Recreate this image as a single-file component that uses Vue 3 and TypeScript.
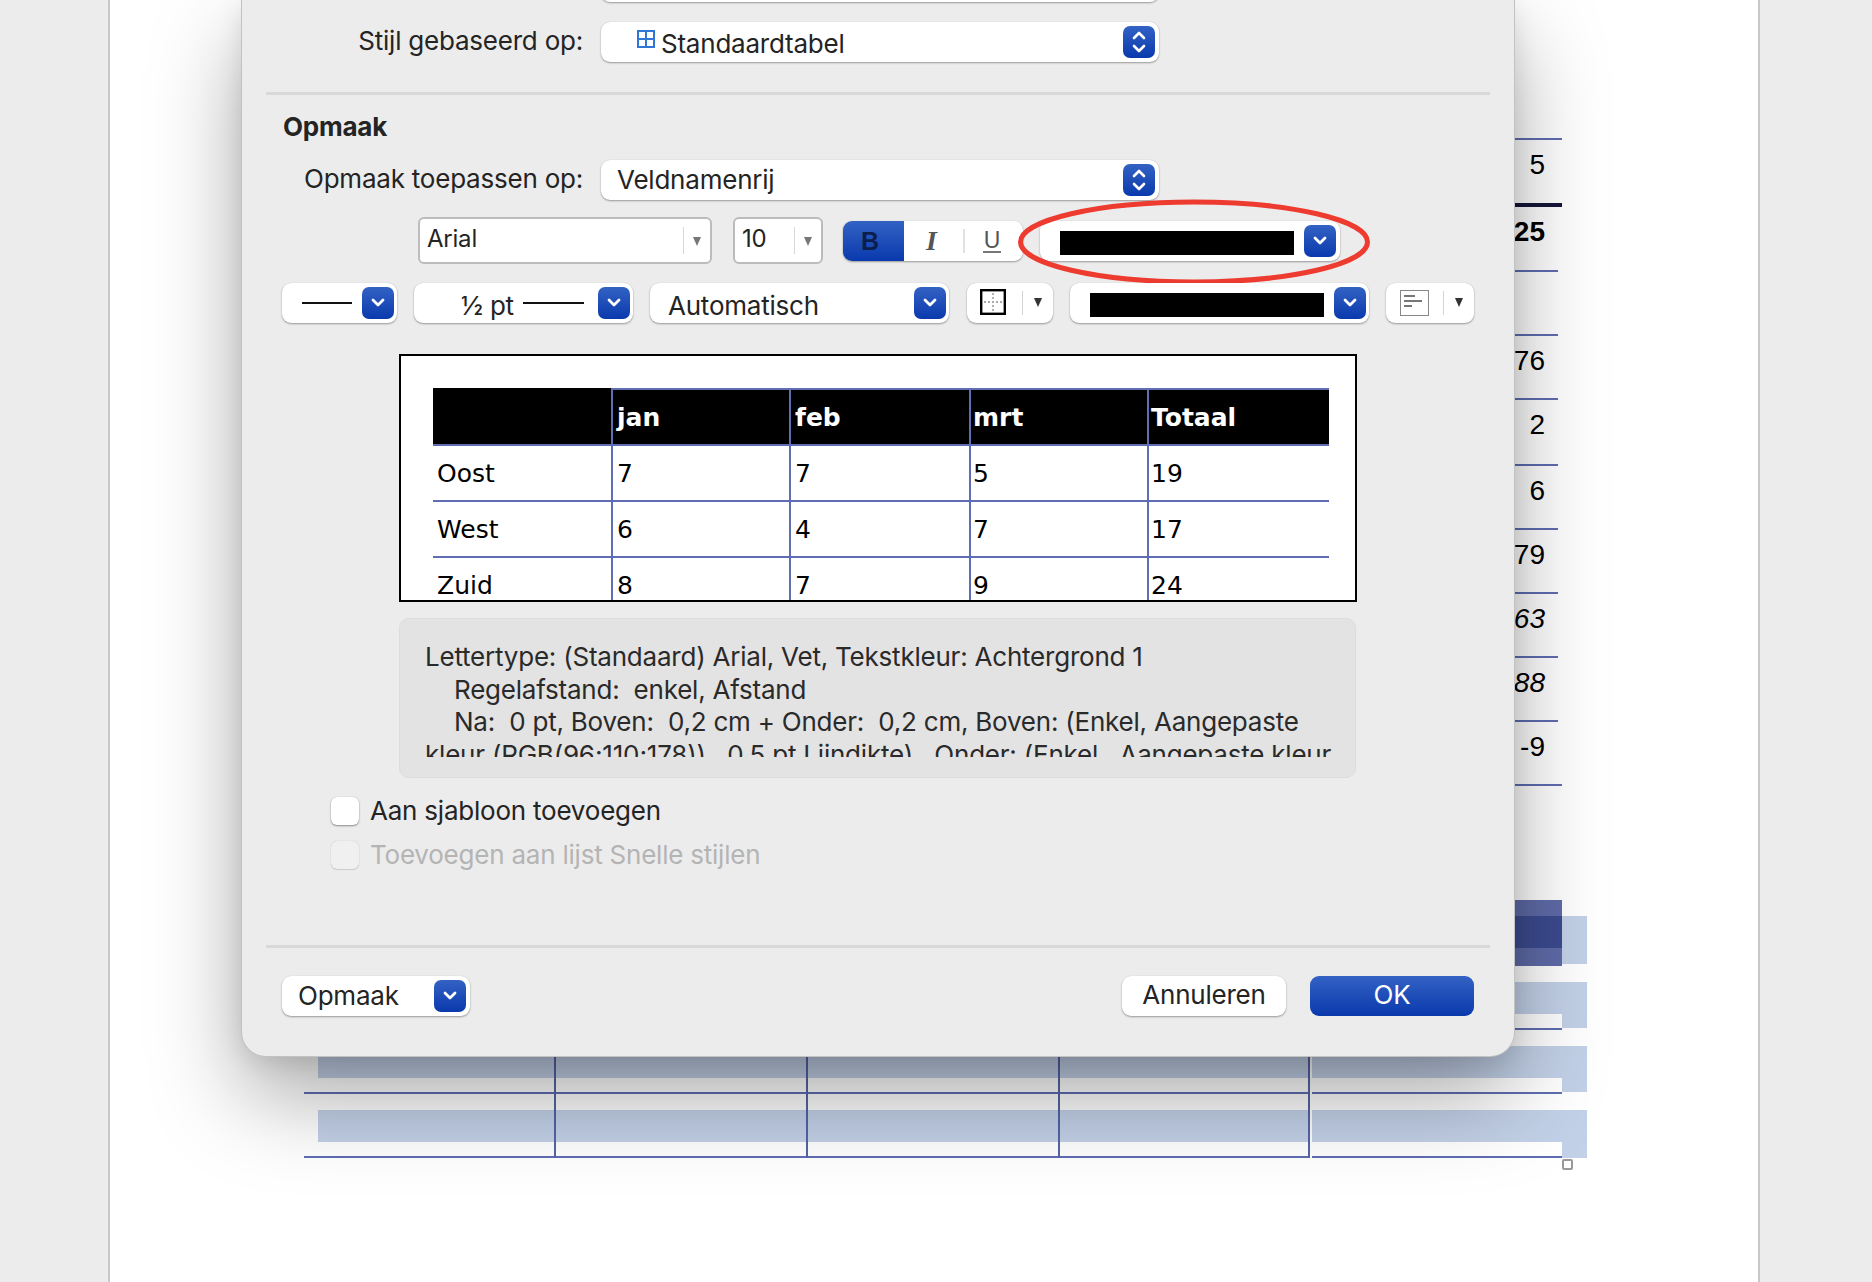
<script setup lang="ts">
interface DocRow {
  text: string
  h: number
  kind?: 'bold' | 'italic'
  thick?: boolean
}

const docRows: DocRow[] = [
  { text: '5', h: 65, thick: true },
  { text: '25', h: 67, kind: 'bold' },
  { text: '', h: 64 },
  { text: '76', h: 64 },
  { text: '2', h: 66 },
  { text: '6', h: 64 },
  { text: '79', h: 64 },
  { text: '63', h: 64, kind: 'italic' },
  { text: '88', h: 64, kind: 'italic' },
  { text: '-9', h: 64 }
]

const previewHead = ['', 'jan', 'feb', 'mrt', 'Totaal']
const previewRows = [
  ['Oost', '7', '7', '5', '19'],
  ['West', '6', '4', '7', '17'],
  ['Zuid', '8', '7', '9', '24']
]

// double spaces matter here, so they stay in strings
const infoLines = [
  { text: 'Lettertype: (Standaard) Arial, Vet, Tekstkleur: Achtergrond 1', indent: false },
  { text: 'Regelafstand:  enkel, Afstand', indent: true },
  { text: 'Na:  0 pt, Boven:  0,2 cm + Onder:  0,2 cm, Boven: (Enkel, Aangepaste', indent: true },
  { text: 'kleur (RGB(96;110;178)),  0,5 pt Lijndikte),  Onder: (Enkel,  Aangepaste kleur', indent: false }
]
</script>

<template>
  <div class="screen">
    <div class="page">
      <div class="doc-rows">
        <div
          v-for="(row, i) in docRows"
          :key="i"
          class="doc-row"
          :class="[row.kind, { thick: row.thick }]"
          :style="{ height: row.h + 'px' }"
        >
          {{ row.text }}
        </div>
        <div class="doc-end"></div>
      </div>

      <div class="doc-bars">
        <div class="bar-row first"><div class="bar-core"></div></div>
        <div class="bar-row"><div class="bar-light"></div></div>
        <div class="bar-row"><div class="bar-light"></div></div>
        <div class="bar-row last"><div class="bar-light"></div></div>
        <div class="vlines">
          <span></span><span></span><span></span><span></span>
        </div>
        <div class="handle"></div>
      </div>
    </div>

    <div class="dialog">
      <div class="form-row stub">
        <span class="label"></span>
        <div class="select wide"></div>
      </div>
      <div class="form-row based">
        <span class="label">Stijl gebaseerd op:</span>
        <div class="select wide">
          <svg class="table-icon" width="18" height="18" viewBox="0 0 18 18">
            <path d="M1 1h16v16H1zM9 1v16M1 9h16" fill="none" stroke="#2f76d6" stroke-width="2" />
          </svg>
          <span class="select-text">Standaardtabel</span>
          <span class="btn-blue stepper">
            <svg width="16" height="26" viewBox="0 0 16 26">
              <path d="M3 9l5-5 5 5M3 17l5 5 5-5" fill="none" stroke="#fff" stroke-width="2.6" stroke-linecap="round" stroke-linejoin="round" />
            </svg>
          </span>
        </div>
      </div>

      <div class="divider d1"></div>
      <div class="heading">Opmaak</div>

      <div class="form-row apply">
        <span class="label">Opmaak toepassen op:</span>
        <div class="select wide">
          <span class="select-text plain">Veldnamenrij</span>
          <span class="btn-blue stepper">
            <svg width="16" height="26" viewBox="0 0 16 26">
              <path d="M3 9l5-5 5 5M3 17l5 5 5-5" fill="none" stroke="#fff" stroke-width="2.6" stroke-linecap="round" stroke-linejoin="round" />
            </svg>
          </span>
        </div>
      </div>

      <div class="font-row">
        <div class="combo arial">
          <span class="combo-text">Arial</span>
          <span class="combo-sep"></span>
          <span class="arrow"></span>
        </div>
        <div class="combo size">
          <span class="combo-text">10</span>
          <span class="combo-sep"></span>
          <span class="arrow"></span>
        </div>
        <div class="biu">
          <span class="biu-b">B</span>
          <span class="biu-i">I</span>
          <span class="biu-sep"></span>
          <span class="biu-u">U</span>
        </div>
        <div class="select colour font-colour">
          <span class="swatch"></span>
          <span class="btn-blue">
            <svg width="16" height="12" viewBox="0 0 16 12">
              <path d="M3 3l5 5 5-5" fill="none" stroke="#fff" stroke-width="2.8" stroke-linecap="round" stroke-linejoin="round" />
            </svg>
          </span>
          <svg class="ellipse" width="352" height="86" viewBox="0 0 352 86">
            <ellipse cx="176" cy="43" rx="173.5" ry="40" fill="none" stroke="#ee3b30" stroke-width="5" />
          </svg>
        </div>
      </div>

      <div class="border-row">
        <div class="select line-style">
          <span class="line l50"></span>
          <span class="btn-blue">
            <svg width="16" height="12" viewBox="0 0 16 12">
              <path d="M3 3l5 5 5-5" fill="none" stroke="#fff" stroke-width="2.8" stroke-linecap="round" stroke-linejoin="round" />
            </svg>
          </span>
        </div>
        <div class="select line-width">
          <span class="pt">½ pt</span>
          <span class="line l61"></span>
          <span class="btn-blue">
            <svg width="16" height="12" viewBox="0 0 16 12">
              <path d="M3 3l5 5 5-5" fill="none" stroke="#fff" stroke-width="2.8" stroke-linecap="round" stroke-linejoin="round" />
            </svg>
          </span>
        </div>
        <div class="select auto">
          <span class="select-text plain">Automatisch</span>
          <span class="btn-blue">
            <svg width="16" height="12" viewBox="0 0 16 12">
              <path d="M3 3l5 5 5-5" fill="none" stroke="#fff" stroke-width="2.8" stroke-linecap="round" stroke-linejoin="round" />
            </svg>
          </span>
        </div>
        <div class="select tool border-tool">
          <svg width="26" height="26" viewBox="0 0 26 26">
            <rect x="1.2" y="1.2" width="23.6" height="23.6" fill="#fff" stroke="#000" stroke-width="2.4" />
            <path d="M13 4v18M4 13h18" stroke="#aaa" stroke-width="1.8" stroke-dasharray="2 2" />
          </svg>
          <span class="tool-sep"></span>
          <span class="arrow dark"></span>
        </div>
        <div class="select colour fill-colour">
          <span class="swatch"></span>
          <span class="btn-blue">
            <svg width="16" height="12" viewBox="0 0 16 12">
              <path d="M3 3l5 5 5-5" fill="none" stroke="#fff" stroke-width="2.8" stroke-linecap="round" stroke-linejoin="round" />
            </svg>
          </span>
        </div>
        <div class="select tool align-tool">
          <svg width="29" height="26" viewBox="0 0 29 26">
            <rect x="0.5" y="0.5" width="28" height="25" fill="#fff" stroke="#888" />
            <path d="M4 6h11M4 11h18M4 16h8" stroke="#777" stroke-width="2" />
          </svg>
          <span class="tool-sep"></span>
          <span class="arrow dark"></span>
        </div>
      </div>

      <div class="preview">
        <div class="pv-table">
          <div v-for="(head, i) in previewHead" :key="'h' + i" class="pv-head" :class="{ blank: i === 0 }">{{ head }}</div>
          <template v-for="(row, r) in previewRows" :key="r">
            <div v-for="(cell, c) in row" :key="c" class="pv-cell" :class="{ first: c === 0 }">{{ cell }}</div>
          </template>
        </div>
      </div>

      <div class="info">
        <div class="info-clip">
          <div v-for="(line, i) in infoLines" :key="i" :class="{ indent: line.indent }">{{ line.text }}</div>
        </div>
      </div>

      <label class="check">
        <span class="box"></span>
        <span>Aan sjabloon toevoegen</span>
      </label>
      <label class="check disabled">
        <span class="box"></span>
        <span>Toevoegen aan lijst Snelle stijlen</span>
      </label>

      <div class="divider d2"></div>

      <div class="footer">
        <div class="select opmaak">
          <span class="select-text plain">Opmaak</span>
          <span class="btn-blue">
            <svg width="16" height="12" viewBox="0 0 16 12">
              <path d="M3 3l5 5 5-5" fill="none" stroke="#fff" stroke-width="2.8" stroke-linecap="round" stroke-linejoin="round" />
            </svg>
          </span>
        </div>
        <div class="actions">
          <button class="btn cancel">Annuleren</button>
          <button class="btn ok">OK</button>
        </div>
      </div>
    </div>
  </div>
</template>

<style>
html,
body {
  margin: 0;
  overflow: hidden;
  background: #ececec;
}
</style>

<style scoped>
.screen {
  position: relative;
  width: 1872px;
  height: 1282px;
  overflow: hidden;
  background: #ececec;
  font-family: Inter, 'Liberation Sans', sans-serif;
  letter-spacing: -0.22px;
  color: #242424;
}

.page {
  margin-left: 108px;
  width: 1652px;
  height: 1282px;
  box-sizing: border-box;
  background: #fff;
  border-left: 2px solid #c8c8c8;
  border-right: 2px solid #c8c8c8;
  padding-top: 138px;
}

.doc-rows {
  margin-left: 1301px;
  width: 147px;
  font-family: 'Liberation Sans', Arial, sans-serif;
  letter-spacing: 0;
  color: #000;
}

.doc-row {
  box-sizing: border-box;
  border-top: 2px solid #5f6eb2;
  padding-right: 13px;
  text-align: right;
  line-height: 50px;
  font-size: 28px;
}

.doc-row.thick {
  width: 151px;
  padding-right: 17px;
}

.doc-row.bold {
  font-weight: 700;
  border-top: 4px solid #16163a;
  width: 151px;
  padding-right: 17px;
  line-height: 50px;
}

.doc-row.italic {
  font-style: italic;
}

.doc-end {
  width: 151px;
  border-top: 2px solid #5f6eb2;
}

.doc-bars {
  position: relative;
  margin-top: 114px;
  margin-left: 194px;
  width: 1258px;
  height: 258px;
}

.bar-row {
  position: relative;
  height: 64px;
  box-sizing: border-box;
  border-bottom: 2px solid #5f6eb2;
}

.bar-row.first {
  height: 66px;
  border-bottom: none;
}

.bar-core {
  margin-left: 14px;
  height: 66px;
  background: #5f6ba9;
  position: relative;
}

.bar-core::before {
  content: '';
  position: absolute;
  left: 0;
  right: 0;
  top: 16px;
  height: 32px;
  background: #3c4b90;
}

.bar-core::after {
  content: '';
  position: absolute;
  left: 100%;
  top: 16px;
  width: 25px;
  height: 48px;
  background: #c3d1e8;
}

.bar-light {
  position: relative;
  margin-left: 14px;
  height: 32px;
  background: #c3d1e8;
  top: 16px;
}

.bar-light::after {
  content: '';
  position: absolute;
  left: 100%;
  top: 0;
  width: 25px;
  height: 46px;
  background: #c3d1e8;
}

.bar-row.last .bar-light::after {
  height: 48px;
}

.vlines {
  position: absolute;
  inset: 0 0 0 0;
  pointer-events: none;
}

.vlines span {
  position: absolute;
  top: 0;
  bottom: 0;
  width: 2px;
  background: #5565a5;
}

.vlines span:nth-child(1) {
  left: 250px;
}

.vlines span:nth-child(2) {
  left: 502px;
}

.vlines span:nth-child(3) {
  left: 754px;
}

.vlines span:nth-child(4) {
  left: 1004px;
  box-shadow: 2px 0 0 #fff;
}

.handle {
  position: absolute;
  left: 1258px;
  bottom: -12px;
  width: 11px;
  height: 11px;
  box-sizing: border-box;
  border: 2px solid #999;
  border-radius: 2px;
  background: #fff;
}

.dialog {
  position: absolute;
  left: 242px;
  top: 0;
  width: 1272px;
  height: 1056px;
  box-sizing: border-box;
  background: #ececec;
  border-radius: 0 0 24px 24px;
  box-shadow: 0 0 0 1px #c2c2c2, 0 40px 90px rgba(0, 0, 0, 0.34), 0 6px 24px rgba(0, 0, 0, 0.1);
  font-size: 26px;
}

.form-row {
  display: flex;
  align-items: center;
  gap: 18px;
}

.stub {
  margin-top: -38px;
}

.based {
  margin-top: 20px;
}

.label {
  width: 341px;
  padding-bottom: 3px;
  text-align: right;
  white-space: nowrap;
}

.select {
  position: relative;
  display: flex;
  align-items: center;
  height: 40px;
  box-sizing: border-box;
  background: #fff;
  border-radius: 9px;
  box-shadow: 0 1px 2px rgba(0, 0, 0, 0.35), 0 0 1px rgba(0, 0, 0, 0.15);
}

.select.wide {
  width: 558px;
}

.select-text {
  white-space: nowrap;
  margin: 2px 0 0 6px;
}

.select-text.plain {
  margin: -2px 0 0 16px;
}

.table-icon {
  margin: -7px 0 0 36px;
}

.btn-blue {
  position: absolute;
  right: 4px;
  top: 4px;
  width: 32px;
  height: 32px;
  border-radius: 7px;
  background: linear-gradient(#3362c4, #0a39ad);
  display: flex;
  align-items: center;
  justify-content: center;
}

.divider {
  height: 3px;
  margin: 0 24px;
  background: #d9d9d9;
}

.d1 {
  margin-top: 30px;
}

.heading {
  margin: 16px 0 0 41px;
  font-weight: 700;
  line-height: 32px;
}

.apply {
  margin-top: 17px;
}

.font-row {
  display: flex;
  align-items: center;
  margin: 17px 0 0 176px;
  height: 47px;
}

.combo {
  display: flex;
  align-items: center;
  height: 47px;
  box-sizing: border-box;
  background: #fff;
  border: 2px solid #bcbcbc;
  border-radius: 6px;
  font-size: 24px;
  position: relative;
}

.combo.arial {
  width: 294px;
}

.combo.size {
  width: 90px;
  margin-left: 21px;
}

.combo-text {
  margin-left: 7px;
  margin-top: -4px;
}

.combo-sep {
  position: absolute;
  top: 8px;
  bottom: 8px;
  right: 26px;
  width: 1px;
  background: #d8d8d8;
}

.arrow {
  position: absolute;
  right: 9px;
  top: 50%;
  margin-top: -4px;
  width: 0;
  height: 0;
  border-left: 4px solid transparent;
  border-right: 4px solid transparent;
  border-top: 9px solid #777;
}

.arrow.dark {
  border-top-color: #333;
  right: 11px;
  margin-top: -5px;
}

.biu {
  display: flex;
  align-items: center;
  width: 180px;
  height: 40px;
  margin-left: 20px;
  background: #fff;
  border-radius: 9px;
  box-shadow: 0 1px 2px rgba(0, 0, 0, 0.35), 0 0 1px rgba(0, 0, 0, 0.15);
  overflow: hidden;
  position: relative;
  color: #555;
  font-family: 'Liberation Serif', serif;
}

.biu-b {
  box-sizing: border-box;
  width: 61px;
  height: 40px;
  line-height: 40px;
  padding-right: 7px;
  text-align: center;
  background: linear-gradient(#3362c4, #0a39ad);
  color: #0b1f4f;
  font-family: 'Liberation Sans', sans-serif;
  font-weight: 700;
  font-size: 25px;
}

.biu-i {
  margin-left: 22px;
  font-style: italic;
  font-weight: 700;
  font-size: 28px;
}

.biu-sep {
  position: absolute;
  left: 120px;
  top: 8px;
  bottom: 8px;
  width: 2px;
  background: #e2e2e2;
}

.biu-u {
  position: absolute;
  left: 140px;
  top: 8px;
  width: 18px;
  height: 22px;
  line-height: 22px;
  text-align: center;
  font-family: 'Liberation Sans', sans-serif;
  font-size: 23px;
  color: #555;
  border-bottom: 2px solid #777;
}

.colour .swatch {
  height: 24px;
  width: 234px;
  margin: 4px 0 0 20px;
  background: #000;
}

.font-colour {
  width: 300px;
  margin-left: 17px;
}

.ellipse {
  position: absolute;
  left: -22px;
  top: -22px;
  pointer-events: none;
}

.border-row {
  display: flex;
  align-items: center;
  margin: 19px 0 0 40px;
}

.border-row .btn-blue {
  right: 3px;
}

.line {
  height: 2px;
  background: #111;
}

.l50 {
  width: 50px;
  margin-left: 20px;
}

.l61 {
  width: 61px;
  margin-left: 9px;
}

.line-style {
  width: 115px;
}

.line-width {
  width: 219px;
  margin-left: 17px;
}

.pt {
  margin: 4px 0 0 47px;
}

.auto {
  width: 299px;
  margin-left: 17px;
}

.auto .select-text.plain {
  margin: 4px 0 0 18px;
}

.tool {
  width: 86px;
  margin-left: 18px;
}

.border-tool {
  padding-left: 13px;
}

.border-tool svg {
  margin-top: -2px;
}

.tool-sep {
  position: absolute;
  top: 8px;
  bottom: 8px;
  right: 30px;
  width: 1px;
  background: #d4d4d4;
}

.fill-colour {
  width: 299px;
  margin-left: 17px;
}

.align-tool {
  width: 88px;
  margin-left: 17px;
  padding-left: 14px;
}

.preview {
  margin: 31px 0 0 157px;
  width: 958px;
  height: 248px;
  box-sizing: border-box;
  border: 2px solid #000;
  background: #fff;
  padding: 32px 0 0 32px;
  overflow: hidden;
}

.pv-table {
  display: grid;
  grid-template-columns: 178px 178px 180px 178px 182px;
  font-family: 'DejaVu Sans', Verdana, sans-serif;
  font-size: 25px;
  letter-spacing: 0;
  color: #000;
  height: 280px;
  grid-auto-rows: 56px;
  grid-template-rows: 58px;
}

.pv-head {
  box-sizing: border-box;
  background: #000;
  color: #fff;
  font-weight: 700;
  border-top: 2px solid #5f6eb2;
  border-left: 2px solid #5f6eb2;
  border-bottom: 2px solid #5f6eb2;
  padding: 8px 0 0 4px;
  line-height: 40px;
}

.pv-head.blank {
  border-top-color: #000;
  border-left: none;
}

.pv-cell {
  box-sizing: border-box;
  border-left: 2px solid #5f6eb2;
  border-bottom: 2px solid #5f6eb2;
  padding-left: 4px;
  line-height: 56px;
}

.pv-table > :nth-child(5n + 4),
.pv-table > :nth-child(5n) {
  padding-left: 2px;
}

.pv-cell.first {
  border-left: none;
  padding-left: 4px;
}

.info {
  margin: 16px 0 0 157px;
  width: 957px;
  height: 160px;
  box-sizing: border-box;
  background: #e3e3e3;
  border: 1px solid #dcdcdc;
  border-radius: 10px;
  padding: 22px 0 0 25px;
}

.info-clip {
  height: 116px;
  overflow: hidden;
  line-height: 32.5px;
  white-space: pre;
  color: #2a2a2a;
}

.indent {
  padding-left: 29px;
}

.check {
  display: flex;
  align-items: center;
  gap: 11px;
  margin-left: 89px;
  height: 29px;
  margin-top: 15px;
}

.check:first-of-type {
  margin-top: 18px;
}

.box {
  width: 28px;
  height: 28px;
  box-sizing: border-box;
  background: #fff;
  border-radius: 6px;
  box-shadow: 0 1px 2px rgba(0, 0, 0, 0.4), 0 0 1px rgba(0, 0, 0, 0.2);
}

.check.disabled {
  color: #b4b4b4;
}

.check.disabled .box {
  background: #f0f0f0;
  box-shadow: 0 0 1px rgba(0, 0, 0, 0.25), 0 1px 1px rgba(0, 0, 0, 0.12);
}

.d2 {
  margin-top: 76px;
}

.footer {
  display: flex;
  justify-content: space-between;
  align-items: center;
  margin: 28px 40px 0 40px;
}

.opmaak {
  width: 188px;
}

.actions {
  display: flex;
  gap: 24px;
}

.btn {
  width: 164px;
  height: 40px;
  padding: 0 0 4px;
  border: none;
  border-radius: 9px;
  font: inherit;
  letter-spacing: inherit;
}

.cancel {
  background: #fff;
  color: #242424;
  box-shadow: 0 1px 2px rgba(0, 0, 0, 0.35), 0 0 1px rgba(0, 0, 0, 0.15);
}

.ok {
  background: linear-gradient(#3362c4, #0a39ad);
  color: #fff;
}
</style>
